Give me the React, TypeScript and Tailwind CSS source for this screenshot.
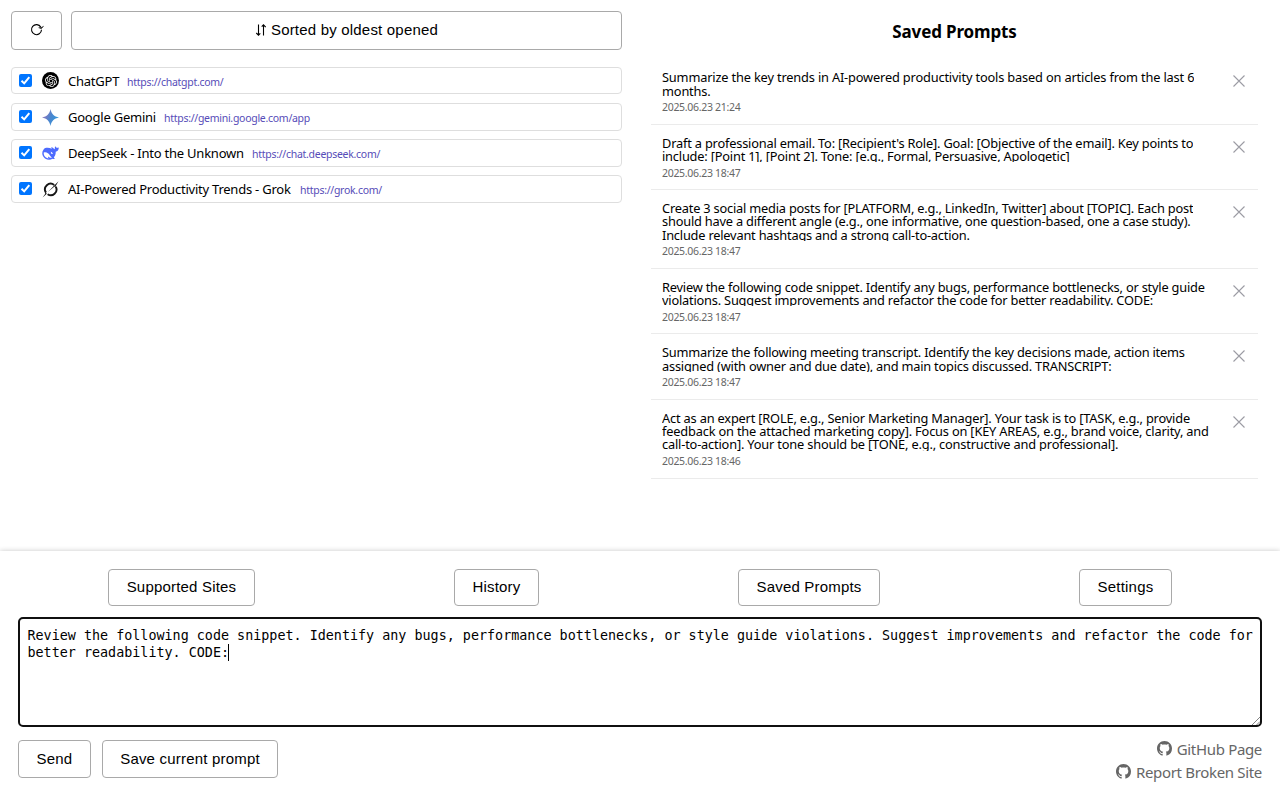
import type { ReactNode } from "react";
import { SiOpenai } from "react-icons/si";

const sites: { name: string; url: string; cls: string; icon: ReactNode }[] = [
  { name: "ChatGPT", url: "https://chatgpt.com/", cls: "w-[50px]", icon: (
    <span className="flex size-[17px] items-center justify-center rounded-full bg-black text-white"><SiOpenai size={12} /></span>
  ) },
  { name: "Google Gemini", url: "https://gemini.google.com/app", cls: "w-[87px]", icon: (
    <svg viewBox="0 0 16 16" className="size-[17px]">
      <defs><linearGradient id="gem" x1="1" y1="0.7" x2="0" y2="0.3"><stop offset="0" stopColor="#2f9bdc" /><stop offset=".5" stopColor="#4a86cf" /><stop offset="1" stopColor="#9b72b8" /></linearGradient></defs>
      <path fill="url(#gem)" d="M8 0C8.800 4.600 11.400 7.200 16 8C11.400 8.800 8.800 11.400 8 16C7.200 11.400 4.600 8.800 0 8C4.600 7.200 7.200 4.600 8 0Z" />
    </svg>
  ) },
  { name: "DeepSeek - Into the Unknown", url: "https://chat.deepseek.com/", cls: "w-[175px]", icon: (
    <svg viewBox="0 0 17 14" className="h-[14px] w-[17px]">
      <path fill="#4d6bfe" d="M16.8 1.6c-.9 0-1.400.4-2.100.2-.5-.2-.9-.7-1.200-1.500-.8.500-.9 1.700-.5 2.900-1.600-.5-2.300-1.900-3.400-2.200-.4.400-.2 1.100.3 1.700C6.700 1.500 3.300 1.300 1.600 3.400-.6 6.200-.1 10.100 3 12.400c2.500 1.700 5.400 1.700 7.500.3.900.4 1.900.4 2.500-.1-.5-.4-1-.7-1.200-1.300 1.500-1.500 2-3.300 1.900-5.500 1.900-.2 3-1.800 3.100-4.200Z" />
      <path fill="#fff" d="M1.700 6.600c2.700-.9 4.800.7 6.200 2.800.8 1.100 1.400 1.800 2 2.200-1.300.6-2.500-.1-3.600-1.200-.6 1.100.2 1.600.5 2C3.600 12.400 1.500 9.600 1.700 6.600Z" />
      <path fill="#fff" d="M8.500 5.700c1.300.1 2.100 1 2.300 2.200-.8.300-1.500.1-1.900-.6.300-.5.200-1-.4-1.600Z" />
    </svg>
  ) },
  { name: "AI-Powered Productivity Trends - Grok", url: "https://grok.com/", cls: "w-[223px]", icon: (
    <svg viewBox="0 0 17 17" className="size-[17px]" fill="none" stroke="#161616">
      <path strokeWidth="1.900" d="M12.200 3.900A5.700 5.700 0 0 0 4 11.600M5.600 13.200A5.700 5.700 0 0 0 13.800 5.800" />
      <path fill="#161616" stroke="none" d="M.6 16.500 3.100 13 3.300 10.900 4.800 12.700ZM5.800 11 16.500.3 13.600 5.200 13.800 6.800 12.500 5.500Z" />
    </svg>
  ) },
];

const prompts: { lines: string[]; time: string; h: string; y: string; t: string }[] = [
  { lines: ["Summarize the key trends in AI-powered productivity tools based on articles from the last 6", "months."], time: "2025.06.23 21:24", h: "h-[66px]", y: "mb-[2px] h-[27px] leading-[13.6px]", t: "tracking-[-0.165px]" },
  { lines: ["Draft a professional email. To: [Recipient's Role]. Goal: [Objective of the email]. Key points to", "include: [Point 1], [Point 2]. Tone: [e.g., Formal, Persuasive, Apologetic]"], time: "2025.06.23 18:47", h: "h-[65px]", y: "mb-[4px] h-[25px] leading-[13.3px]", t: "tracking-[-0.19px]" },
  { lines: ["Create 3 social media posts for [PLATFORM, e.g., LinkedIn, Twitter] about [TOPIC]. Each post", "should have a different angle (e.g., one informative, one question-based, one a case study).", "Include relevant hashtags and a strong call-to-action."], time: "2025.06.23 18:47", h: "h-[79px]", y: "mb-[3px] h-[39px] leading-[13.3px]", t: "tracking-[-0.2px]" },
  { lines: ["Review the following code snippet. Identify any bugs, performance bottlenecks, or style guide", "violations. Suggest improvements and refactor the code for better readability. CODE:"], time: "2025.06.23 18:47", h: "h-[65px]", y: "mb-[4px] h-[25px] leading-[13.3px]", t: "tracking-[-0.2px]" },
  { lines: ["Summarize the following meeting transcript. Identify the key decisions made, action items", "assigned (with owner and due date), and main topics discussed. TRANSCRIPT:"], time: "2025.06.23 18:47", h: "h-[66px]", y: "mb-[3px] h-[26px] leading-[13.6px]", t: "tracking-[-0.205px]" },
  { lines: ["Act as an expert [ROLE, e.g., Senior Marketing Manager]. Your task is to [TASK, e.g., provide", "feedback on the attached marketing copy]. Focus on [KEY AREAS, e.g., brand voice, clarity, and", "call-to-action]. Your tone should be [TONE, e.g., constructive and professional]."], time: "2025.06.23 18:46", h: "h-[79px]", y: "mb-[3px] h-[39px] leading-[13.2px]", t: "tracking-[-0.18px]" },
];

const button = "shrink-0 rounded-[4px] border border-[#a9a9a9] bg-white text-center font-['Liberation_Sans',Arial,sans-serif] text-[15px] leading-none tracking-[0.013em] whitespace-nowrap text-black";

function Check() {
  return (
    <span className="mb-px flex size-[13px] shrink-0 items-center justify-center rounded-[2px] bg-[#0075ff]">
      <svg viewBox="0 0 13 13" className="size-[13px]" fill="none" stroke="#fff" strokeWidth="2"><path d="M2.500 6.800 5.200 9.400 10.300 3.200" /></svg>
    </span>
  );
}

function GithubMark() {
  return (
    <svg viewBox="0 0 16 16" className="mb-[2px] size-[15px]" fill="currentColor">
      <path d="M8 0C3.58 0 0 3.58 0 8c0 3.54 2.29 6.53 5.47 7.59.4.07.55-.17.55-.38 0-.19-.01-.82-.01-1.49-2.01.37-2.53-.49-2.69-.94-.09-.23-.48-.94-.82-1.13-.28-.15-.68-.52-.01-.53.63-.01 1.08.58 1.23.82.72 1.21 1.87.87 2.33.66.07-.52.28-.87.51-1.07-1.78-.2-3.64-.89-3.64-3.95 0-.87.31-1.59.82-2.15-.08-.2-.36-1.02.08-2.12 0 0 .67-.21 2.2.82.64-.18 1.32-.27 2-.27s1.36.09 2 .27c1.53-1.04 2.2-.82 2.2-.82.44 1.1.16 1.92.08 2.12.51.56.82 1.27.82 2.15 0 3.07-1.87 3.75-3.65 3.95.29.25.54.73.54 1.48 0 1.07-.01 1.93-.01 2.2 0 .21.15.46.55.38A8.01 8.01 0 0 0 16 8c0-4.42-3.58-8-8-8z" />
    </svg>
  );
}

export default function App() {
  return (
    <div className="flex h-[800px] w-[1280px] flex-col overflow-hidden bg-white font-['Noto_Sans','Open_Sans',sans-serif] text-black">
      <main className="flex h-[551px] shrink-0">
        <section className="w-[622px] shrink-0 pt-[11px] pl-[11px]">
          <div className="flex h-[39px] gap-[9px]">
            <button className={`${button} flex w-[51px] items-center justify-center pb-px`}>
              <svg viewBox="0 0 14 14" className="size-[14px]" fill="none" stroke="#000" strokeWidth="1.100"><path d="M10.800 4.100A5 5 0 1 0 11.500 6.800" /><path fill="#000" strokeWidth=".4" d="M13.600 3.200 11.300 5.700 8.600 4.700 11.200 4.600Z" /></svg>
            </button>
            <button className={`${button} flex grow items-center justify-center gap-[4px] pb-[2px]`}>
              <svg viewBox="0 0 12 12" className="size-[12px]" fill="none" stroke="#000" strokeWidth="1.100"><path d="M3.500.500V11M1.300 9 3.500 11.200 5.300 9.400M8.500 11.500V1M6.700 2.700 8.500.900 10.700 3.100" /></svg>
              <span>Sorted by oldest opened</span>
            </button>
          </div>
          <ul className="mt-[17px] flex flex-col">
            {sites.map((s) => (
              <li key={s.name} className="mb-2 flex h-[28px] items-center rounded-[4px] border border-[#dedede] pl-[7px] first:mb-[9px] first:h-[27px]">
                <Check />
                <span className="ml-[9px] flex w-[19px] shrink-0 items-center justify-center">{s.icon}</span>
                <span className={`ml-[8px] text-[13px] leading-4 tracking-[-0.23px] whitespace-nowrap ${s.cls}`}>{s.name}</span>
                <a className="ml-[9px] pt-[2px] text-[10.5px] leading-4 tracking-[-0.28px] whitespace-nowrap text-[#564cb8]">{s.url}</a>
              </li>
            ))}
          </ul>
        </section>
        <section className="ml-[29px] w-[607px] shrink-0">
          <h2 className="pt-[20px] text-center text-[17px] leading-[24px] font-bold tracking-[-0.15px]">Saved Prompts</h2>
          <ul className="mt-[15px]">
            {prompts.map((p) => (
              <li key={p.lines[0]} className={`flex justify-between border-b border-[#ebebeb] pl-[11px] ${p.h}`}>
                <div className="pt-[12px]">
                  <div className={`overflow-hidden text-[12.8px] whitespace-nowrap ${p.y} ${p.t}`}>
                    {p.lines.map((l) => <p key={l}>{l}</p>)}
                  </div>
                  <p className="text-[10.5px] leading-[14px] tracking-[-0.3px] text-[#666]">{p.time}</p>
                </div>
                <svg viewBox="0 0 12 12" className="mt-[16px] mr-[13px] size-[12px] shrink-0" stroke="#9c9ca4" strokeWidth="1.100"><path d="M.5.5 11.500 11.500M11.500.5.5 11.500" /></svg>
              </li>
            ))}
          </ul>
        </section>
      </main>
      <footer className="h-[249px] shrink-0 bg-white px-[18px] pt-[18px] shadow-[0_0_5px_rgba(0,0,0,0.22)]">
        <nav className="flex h-[37px] justify-between pr-[90px] pl-[90px]">
          <button className={`${button} w-[147px] pb-[2px]`}>Supported Sites</button>
          <button className={`${button} w-[85px] pb-[2px]`}>History</button>
          <button className={`${button} w-[142px] pb-[2px]`}>Saved Prompts</button>
          <button className={`${button} w-[93px] pb-[2px]`}>Settings</button>
        </nav>
        <div className="relative mt-[11px] h-[110px] rounded-[5px] border-2 border-[#101010] pt-[8px] pl-[7.5px] font-['DejaVu_Sans_Mono',monospace] text-[13.4px] leading-[17px] whitespace-nowrap">
          <p>Review the following code snippet. Identify any bugs, performance bottlenecks, or style guide violations. Suggest improvements and refactor the code for</p>
          <p className="flex">better readability. CODE:<span className="-ml-px h-[17px] w-px bg-black" /></p>
          <svg viewBox="0 0 8 8" className="absolute right-0 bottom-0 size-2" stroke="#666" strokeWidth=".8"><path d="M0 8 8 0M4.500 8 8 4.500" /></svg>
        </div>
        <div className="mt-[13px] flex">
          <button className={`${button} h-[38px] w-[73px] pb-px`}>Send</button>
          <button className={`${button} ml-[11px] h-[38px] w-[176px] pb-px`}>Save current prompt</button>
          <div className="ml-auto flex flex-col items-end text-[15px] leading-[23px] tracking-[-0.33px] text-[#666]">
            <a className="-mt-[2px] flex items-center gap-[5px]"><GithubMark /><span>GitHub Page</span></a>
            <a className="flex items-center gap-[5px]"><GithubMark /><span>Report Broken Site</span></a>
          </div>
        </div>
      </footer>
    </div>
  );
}
